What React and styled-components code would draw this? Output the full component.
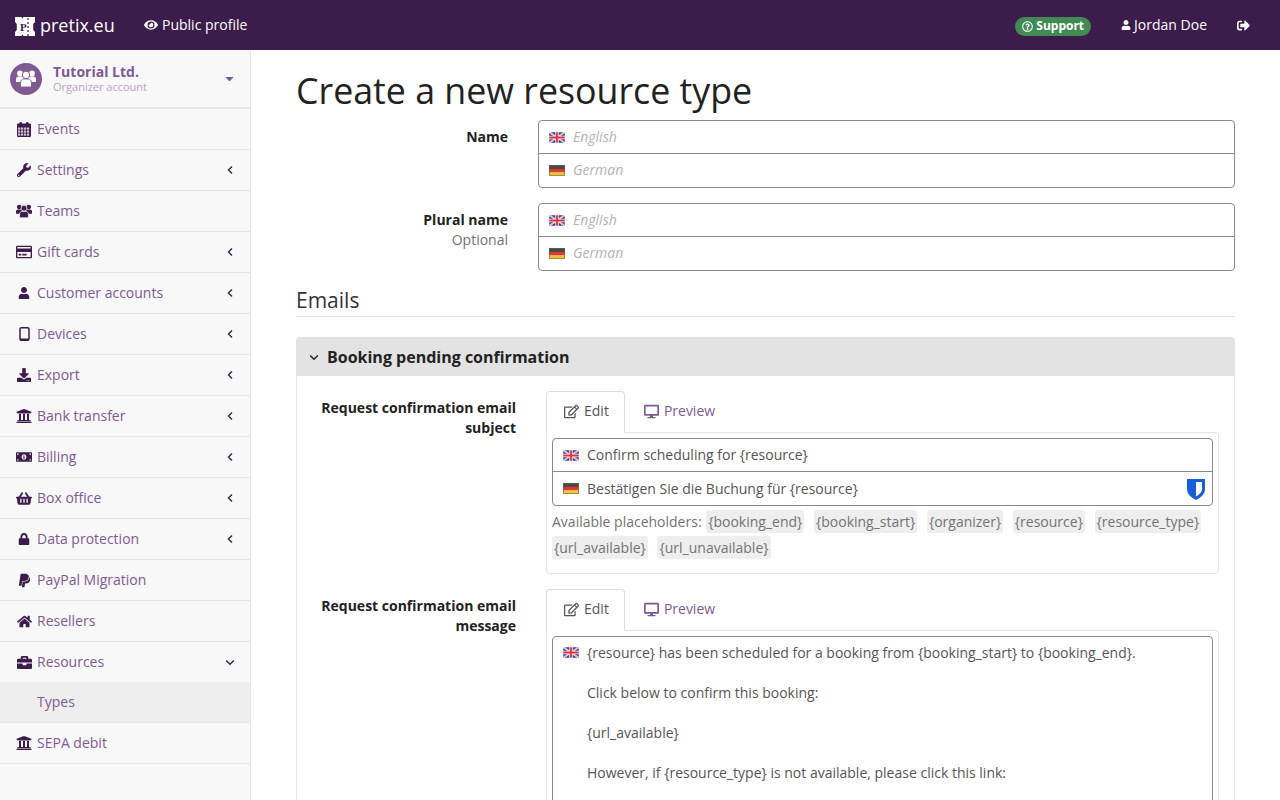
import React from "react";
import styled, { createGlobalStyle } from "styled-components";
import {
  FaEye, FaWrench, FaRegCreditCard, FaUser, FaDownload,
  FaUniversity, FaMoneyBillAlt, FaShoppingBasket, FaLock, FaPaypal, FaHome, FaBriefcase,
  FaRegEdit, FaDesktop, FaRegQuestionCircle, FaSignOutAlt, FaCaretDown,
} from "react-icons/fa";

const Global = createGlobalStyle`
  html, body {
    margin: 0;
    height: 800px;
    overflow: hidden;
    background: #fff;
    font-family: "Open Sans", sans-serif;
    font-size: 14px;
    line-height: 20px;
    color: #333;
  }
  * { box-sizing: border-box; }
`;

const TopBar = styled.header`
  height: 50px;
  background: #3b1c4a;
  color: #fff;
  display: flex;
  align-items: center;
  padding-left: 15px;
`;
const Brand = styled.div`
  display: flex;
  align-items: center;
  font-size: 18px;
  gap: 5px;
  width: 129px;
  svg { position: relative; top: 2px; }
`;
const TopLink = styled.a`
  display: inline-flex;
  align-items: center;
  gap: ${(p) => p.$iconGap || 4}px;
  color: #fff;
  font-size: 14px;
  margin-right: ${(p) => p.$gap || 0}px;
`;
const TopRight = styled.div`
  margin-left: auto;
  display: flex;
  align-items: center;
  padding-right: 30px;
`;
const SupportBadge = styled.span`
  display: inline-flex;
  align-items: center;
  gap: 3px;
  height: 19px;
  padding: 0 7px;
  background: #418a54;
  border-radius: 10px;
  font-size: 12px;
  font-weight: 700;
  margin-right: 30px;
  position: relative;
  top: 1px;
`;

const Layout = styled.div`
  display: flex;
  height: 750px;
`;
const Sidebar = styled.aside`
  width: 251px;
  flex: none;
  background: #f8f8f8;
  border-right: 1px solid #e7e7e7;
`;
const OrgHeader = styled.div`
  height: 59px;
  display: flex;
  align-items: center;
  padding: 0 15px 0 10px;
  border-bottom: 2px solid #e7e7e7;
`;
const OrgAvatar = styled.span`
  width: 32px;
  height: 32px;
  border-radius: 50%;
  background: #7f5a91;
  color: #fff;
  display: flex;
  align-items: center;
  justify-content: center;
  margin-right: 11px;
`;
const OrgText = styled.div`
  flex: 1;
  color: #7f5a91;
  strong { display: block; font-weight: 700; font-size: 14px; line-height: 15px; }
  small { display: block; font-size: 11px; line-height: 15px; color: #b7a3c1; }
`;
const OrgCaret = styled.span`
  color: #7f5a91;
  font-size: 13px;
  display: flex;
  position: relative;
  left: 1px;
`;
const NavItem = styled.a`
  height: 41px;
  display: flex;
  align-items: center;
  border-bottom: 1px solid #e7e7e7;
  color: #7f5a91;
  padding-left: 37px;
  padding-right: 15px;
  position: relative;
  background: ${(p) => (p.$active ? "#eeeeee" : "transparent")};
  ${(p) => (p.$active ? "margin-top: -1px;" : "")}
`;
const NavIcon = styled.span`
  position: absolute;
  left: 16px;
  width: 16px;
  height: 17px;
  display: flex;
  align-items: center;
  justify-content: center;
  color: #3b1c4a;
  font-size: ${(p) => p.$size || 14}px;
`;
const NavArrow = styled.span`
  margin-left: auto;
  color: #3b1c4a;
  display: flex;
`;

const Main = styled.main`
  flex: 1;
  padding: 0 45px;
  overflow: hidden;
`;
const Title = styled.h1`
  margin: 20px 0 10px;
  font-size: 35.75px;
  line-height: 40px;
  font-weight: 400;
  color: #222;
`;
const FormRow = styled.div`
  display: flex;
  margin-bottom: 15px;
`;
const LabelCol = styled.div`
  width: ${(p) => p.$w}px;
  flex: none;
  text-align: right;
  padding-top: 7px;
  strong { display: block; font-weight: 700; color: #222; }
  span { color: #737373; }
`;
const FieldCol = styled.div`
  flex: 1;
  min-width: 0;
  margin-left: 30px;
`;
const I18nGroup = styled.div`
  border: 1px solid #8a8a8a;
  border-radius: 4px;
  position: relative;
`;
const I18nLine = styled.div`
  height: ${(p) => (p.$tall ? "auto" : "32px")};
  display: flex;
  align-items: ${(p) => (p.$tall ? "flex-start" : "center")};
  padding: ${(p) => (p.$tall ? "6px 10px" : "0 10px")};
  gap: 8px;
  & + & {
    border-top: 1px solid #8a8a8a;
    height: 34px;
  }
`;
const FlagBox = styled.span`
  flex: none;
  width: 16px;
  display: flex;
  ${(p) => (p.$tall ? "margin-top: 4px;" : "")}
`;
const Placeholder = styled.span`
  color: #b3b3b3;
  font-style: italic;
  margin-bottom: ${(p) => (p.$lift ? 1 : 0)}px;
`;
const Value = styled.span`
  color: #555;
  white-space: pre-wrap;
  line-height: 20px;
`;
const LegendTitle = styled.h2`
  margin: 15px 0 20px;
  font-size: 21px;
  line-height: 28px;
  font-weight: 400;
  color: #333;
  border-bottom: 1px solid #e5e5e5;
  height: 31px;
`;
const Panel = styled.section`
  border: 1px solid #e3e3e3;
  border-radius: 4px;
`;
const PanelHead = styled.div`
  height: 39px;
  margin: -1px -1px 0;
  background: #e3e3e3;
  border-radius: 4px 4px 0 0;
  display: flex;
  align-items: center;
  padding-left: 13px;
  gap: 8px;
  font-size: 16px;
  font-weight: 700;
  color: #222;
`;
const PanelBody = styled.div`
  padding: 15px 15px 0 0;
`;
const Tabs = styled.div`
  display: flex;
  height: 42px;
`;
const Tab = styled.a`
  display: flex;
  align-items: center;
  gap: 5px;
  padding: ${(p) => (p.$active ? "0 15px 3px 17px" : "0 16px 2px 18px")};
  color: ${(p) => (p.$active ? "#555" : "#7f5a91")};
  background: ${(p) => (p.$active ? "#fff" : "transparent")};
  border: 1px solid ${(p) => (p.$active ? "#ddd" : "transparent")};
  border-bottom: none;
  border-radius: 4px 4px 0 0;
  position: relative;
  z-index: ${(p) => (p.$active ? 1 : 0)};
  height: ${(p) => (p.$active ? 42 : 41)}px;
  svg { color: ${(p) => (p.$active ? "#555" : "#7f5a91")}; width: 15px; height: 15px; }
`;
const TabPane = styled.div`
  border: 1px solid #e3e3e3;
  border-radius: 0 4px 4px 4px;
  margin-top: -1px;
  padding: 5px;
`;
const HelpBlock = styled.div`
  margin-top: 3px;
  padding-bottom: 7px;
  color: #737373;
  line-height: 26px;
`;
const Chip = styled.code`
  font-family: inherit;
  font-size: 14px;
  background: #eee;
  border-radius: 3px;
  padding: 2px;
  margin-right: 6px;
  color: #737373;
  &:first-of-type { margin-left: 1px; }
`;
const ShieldIcon = styled.svg`
  position: absolute;
  right: 7px;
  bottom: 5px;
`;

const Chevron = ({ dir }) => (
  <svg width="10" height="10" viewBox="0 0 10 10" fill="none" stroke="currentColor" strokeWidth="1.4">
    <path d={dir === "down" ? "M1.200 3.500L5 7.300l3.800-3.800" : "M7 1.500L3.500 5 7 8.500"} />
  </svg>
);

const CalendarIcon = () => (
  <svg width="14" height="15" viewBox="0 0 14 15">
    <rect y="1.500" width="14" height="13.500" rx="1" fill="currentColor" />
    <rect x="2.500" width="2.500" height="4" rx="1" fill="currentColor" />
    <rect x="9" width="2.500" height="4" rx="1" fill="currentColor" />
    {[5.500, 8.500, 11.500].map((y) =>
      [1, 4, 7, 10].map((x) => <rect key={`${x}-${y}`} x={x} y={y} width="2.200" height="2.200" fill="#cfc6d4" />)
    )}
  </svg>
);

const TabletIcon = () => (
  <svg width="11" height="14" viewBox="0 0 11 14">
    <rect x="1" y="0.750" width="9" height="12.500" rx="1.500" fill="none" stroke="currentColor" strokeWidth="1.500" />
    <rect x="1" y="11.500" width="9" height="2" fill="currentColor" />
  </svg>
);

// three busts, the middle one stands in front with a halo in the background colour
const UsersIcon = ({ width, height, bg }) => (
  <svg width={width} height={height} viewBox="0 0 20 17" fill="currentColor">
    <circle cx="4" cy="3.500" r="2.900" />
    <circle cx="16" cy="3.500" r="2.900" />
    <path d="M0 12V9c0-1.500 1-2.500 2.500-2.500h3C7 6.500 8 7.500 8 9v3z" />
    <path d="M12 12V9c0-1.500 1-2.500 2.500-2.500h3C19 6.500 20 7.500 20 9v3z" />
    <circle cx="10" cy="5" r="3.700" stroke={bg} strokeWidth="0.900" />
    <path d="M4.500 17v-4.500c0-2 1.500-3.500 3-3.500h5c1.500 0 3 1.500 3 3.500V17z" stroke={bg} strokeWidth="0.900" />
  </svg>
);

const UkFlag = () => (
  <svg width="16" height="11" viewBox="0 0 16 11">
    <rect width="16" height="11" fill="#2f4398" />
    <path d="M0 0l16 11M16 0L0 11" stroke="#f2f2f6" strokeWidth="1.800" />
    <path d="M0 0l16 11M16 0L0 11" stroke="#d8566a" strokeWidth="0.500" />
    <path d="M8 0v11M0 5.500h16" stroke="#f8f4f4" strokeWidth="3.400" />
    <path d="M8 0v11M0 5.500h16" stroke="#e0303e" strokeWidth="1.800" />
    <rect x="0.500" y="0.500" width="15" height="10" fill="none" stroke="#fff" strokeOpacity="0.25" />
  </svg>
);
const DeFlag = () => (
  <svg width="16" height="11" viewBox="0 0 16 11">
    <rect width="16" height="4" fill="#484848" />
    <rect y="4" width="16" height="3.500" fill="#dd3a2e" />
    <rect y="7.500" width="16" height="3.500" fill="#f0c23a" />
    <rect x="0.500" y="0.500" width="15" height="10" fill="none" stroke="#6e6a50" strokeOpacity="0.6" />
  </svg>
);

const Logo = () => (
  <svg width="20" height="20" viewBox="0 0 20 20">
    <path d="M0 0h6.500l1 1.500 1-1.500H20v5l-1.800 2v6l1.800 2v4H8.500l-1-1.500-1 1.500H0v-4l1.800-2V7L0 5z" fill="#fff" />
    <path d="M13 1v18" stroke="#3b1c4a" strokeWidth="1.200" strokeDasharray="2 2" />
    <rect x="4" y="5" width="8" height="10" fill="#fff" />
    <text x="5" y="13.500" fontSize="11" fontWeight="700" fontFamily="Liberation Serif, serif" fill="#3b1c4a">P</text>
  </svg>
);

const navItems = [
  { icon: <CalendarIcon />, label: "Events" },
  { icon: <FaWrench />, label: "Settings", arrow: true },
  { icon: <UsersIcon width={16} height={14} bg="#f8f8f8" />, label: "Teams" },
  { icon: <FaRegCreditCard />, size: 16, label: "Gift cards", arrow: true },
  { icon: <FaUser />, size: 12, label: "Customer accounts", arrow: true },
  { icon: <TabletIcon />, label: "Devices", arrow: true },
  { icon: <FaDownload />, label: "Export", arrow: true },
  { icon: <FaUniversity />, size: 16, label: "Bank transfer", arrow: true },
  { icon: <FaMoneyBillAlt />, size: 16, label: "Billing", arrow: true },
  { icon: <FaShoppingBasket />, size: 17, label: "Box office", arrow: true },
  { icon: <FaLock />, size: 12, label: "Data protection", arrow: true },
  { icon: <FaPaypal />, size: 15, label: "PayPal Migration" },
  { icon: <FaHome />, size: 15, label: "Resellers" },
  { icon: <FaBriefcase />, size: 15, label: "Resources", open: true },
  { label: "Types", active: true },
  { icon: <FaUniversity />, size: 16, label: "SEPA debit" },
];

const placeholders = ["{booking_end}", "{booking_start}", "{organizer}", "{resource}", "{resource_type}", "{url_available}", "{url_unavailable}"];

const message = `{resource} has been scheduled for a booking from {booking_start} to {booking_end}.

Click below to confirm this booking:

{url_available}

However, if {resource_type} is not available, please click this link:

{url_unavailable}`;

const EmptyI18n = () => (
  <I18nGroup>
    <I18nLine>
      <FlagBox><UkFlag /></FlagBox>
      <Placeholder>English</Placeholder>
    </I18nLine>
    <I18nLine>
      <FlagBox><DeFlag /></FlagBox>
      <Placeholder $lift>German</Placeholder>
    </I18nLine>
  </I18nGroup>
);

const EditTabs = () => (
  <Tabs>
    <Tab $active><FaRegEdit /> Edit</Tab>
    <Tab><FaDesktop /> Preview</Tab>
  </Tabs>
);

export default function App() {
  return (
    <>
      <Global />
      <TopBar>
        <Brand><Logo /> pretix.eu</Brand>
        <TopLink><FaEye /> Public profile</TopLink>
        <TopRight>
          <SupportBadge><FaRegQuestionCircle size={11} /> Support</SupportBadge>
          <TopLink $gap={30} $iconGap={3}><FaUser size={10} /> Jordan Doe</TopLink>
          <TopLink><FaSignOutAlt size={13} /></TopLink>
        </TopRight>
      </TopBar>
      <Layout>
        <Sidebar>
          <OrgHeader>
            <OrgAvatar><UsersIcon width={20} height={17} bg="#7f5a91" /></OrgAvatar>
            <OrgText>
              <strong>Tutorial Ltd.</strong>
              <small>Organizer account</small>
            </OrgText>
            <OrgCaret><FaCaretDown /></OrgCaret>
          </OrgHeader>
          {navItems.map((item) => (
            <NavItem key={item.label} $active={item.active}>
              {item.icon && <NavIcon $size={item.size}>{item.icon}</NavIcon>}
              {item.label}
              {item.arrow && <NavArrow><Chevron /></NavArrow>}
              {item.open && <NavArrow><Chevron dir="down" /></NavArrow>}
            </NavItem>
          ))}
        </Sidebar>
        <Main>
          <Title>Create a new resource type</Title>
          <FormRow>
            <LabelCol $w={212}><strong>Name</strong></LabelCol>
            <FieldCol><EmptyI18n /></FieldCol>
          </FormRow>
          <FormRow>
            <LabelCol $w={212}><strong>Plural name</strong><span>Optional</span></LabelCol>
            <FieldCol><EmptyI18n /></FieldCol>
          </FormRow>
          <LegendTitle>Emails</LegendTitle>
          <Panel>
            <PanelHead><Chevron dir="down" /> Booking pending confirmation</PanelHead>
            <PanelBody>
              <FormRow>
                <LabelCol $w={219}><strong>Request confirmation email subject</strong></LabelCol>
                <FieldCol>
                  <EditTabs />
                  <TabPane>
                    <I18nGroup>
                      <I18nLine>
                        <FlagBox><UkFlag /></FlagBox>
                        <Value>Confirm scheduling for {"{resource}"}</Value>
                      </I18nLine>
                      <I18nLine>
                        <FlagBox><DeFlag /></FlagBox>
                        <Value>Bestätigen Sie die Buchung für {"{resource}"}</Value>
                      </I18nLine>
                      <ShieldIcon width="18" height="21" viewBox="0 0 18 21">
                        <path d="M0 0h18v10c0 5-4 8.500-9 11-5-2.500-9-6-9-11z" fill="#175ddc" />
                        <path d="M9 3h6v7c0 3.500-3 5.500-6 7.500z" fill="#fff" />
                      </ShieldIcon>
                    </I18nGroup>
                    <HelpBlock>
                      Available placeholders: {placeholders.map((p) => <React.Fragment key={p}><Chip>{p}</Chip> </React.Fragment>)}
                    </HelpBlock>
                  </TabPane>
                </FieldCol>
              </FormRow>
              <FormRow>
                <LabelCol $w={219}><strong>Request confirmation email message</strong></LabelCol>
                <FieldCol>
                  <EditTabs />
                  <TabPane>
                    <I18nGroup>
                      <I18nLine $tall>
                        <FlagBox $tall><UkFlag /></FlagBox>
                        <Value>{message}</Value>
                      </I18nLine>
                    </I18nGroup>
                  </TabPane>
                </FieldCol>
              </FormRow>
            </PanelBody>
          </Panel>
        </Main>
      </Layout>
    </>
  );
}
